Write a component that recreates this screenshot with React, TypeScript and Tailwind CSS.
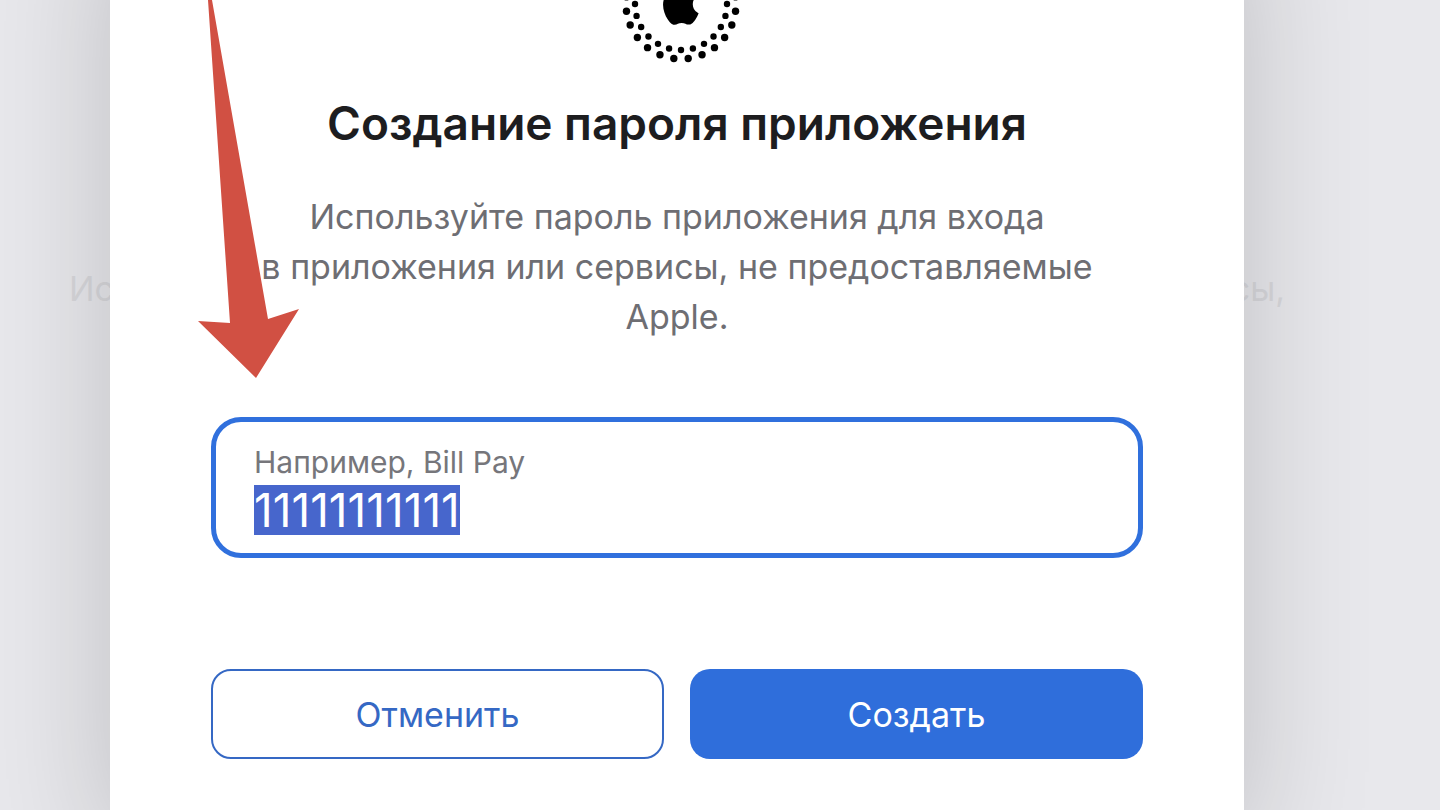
import React, { useEffect, useRef, useState } from 'react';

const STEPS = Array.from({ length: 24 }, (_, i) => i);

// Point on a ring around the centre of the 120x120 badge
const ringPoint = (radius: number, degrees: number) => {
  const rad = (degrees * Math.PI) / 180;
  return { cx: 60 + radius * Math.sin(rad), cy: 60 + radius * Math.cos(rad) };
};

const AccountBadge: React.FC = () => (
  <svg className="mx-auto block translate-x-1" width="120" height="120" viewBox="0 0 120 120" aria-hidden="true">
    {/* Outer ring is shifted by half a step */}
    {STEPS.map((i) => (
      <circle key={`outer-${i}`} {...ringPoint(55, i * 15 + 7.5)} r="3.7" />
    ))}
    {STEPS.map((i) => (
      <circle key={`inner-${i}`} {...ringPoint(46, i * 15)} r="3.2" />
    ))}
    <path
      transform="translate(38 37) scale(1.82)"
      d="M12.152 6.896c-.948 0-2.415-1.078-3.96-1.04-2.04.027-3.91 1.183-4.961 3.014-2.117 3.675-.546 9.103 1.519 12.09 1.013 1.454 2.208 3.09 3.792 3.039 1.52-.065 2.09-.987 3.935-.987 1.831 0 2.35.987 3.96.948 1.637-.026 2.676-1.48 3.676-2.948 1.156-1.688 1.636-3.325 1.662-3.415-.039-.013-3.182-1.221-3.22-4.857-.026-3.04 2.48-4.494 2.597-4.559-1.429-2.09-3.623-2.324-4.39-2.376-2-.156-3.675 1.09-4.61 1.09zM15.53 3.83c.843-1.012 1.4-2.427 1.245-3.83-1.207.052-2.662.805-3.532 1.818-.78.896-1.454 2.338-1.273 3.714 1.338.104 2.715-.688 3.559-1.701"
    />
  </svg>
);

export default function App() {
  const [name, setName] = useState('11111111111');
  const inputRef = useRef<HTMLInputElement>(null);

  // Select the name on open so that it can be typed over
  useEffect(() => {
    inputRef.current?.focus({ preventScroll: true });
    inputRef.current?.select();
  }, []);

  return (
    <div className="relative h-screen overflow-hidden bg-[#e8e8ec] pr-[86px] font-['Inter',sans-serif]">
      {/* Page under the dialog: only the ends of its line stick out */}
      <div className="absolute top-[264px] right-[86px] left-0">
        <p className="mx-auto flex max-w-[1216px] justify-between text-[34px] leading-[50px] text-[#d8d8dc]">
          <span>Ис</span>
          <span>сы,</span>
        </p>
      </div>

      {/* Dialog */}
      <div
        role="dialog"
        aria-labelledby="dialog-title"
        className="relative mx-auto -mt-20 max-w-[1134px] bg-white px-[101px] pt-6 pb-[91px] shadow-[0_0_120px_rgba(0,0,0,0.18)]"
      >
        <AccountBadge />
        <h1 id="dialog-title" className="mt-8 text-center text-[46px] leading-[54px] font-semibold text-[#1d1d1f]">
          Создание пароля приложения
        </h1>
        <p className="mt-[42px] text-center text-[34px] leading-[50px] text-[#6e6e73]">
          Используйте пароль приложения для входа
          <br />
          <span className="whitespace-nowrap">в приложения или сервисы, не предоставляемые</span>
          <br />
          Apple.
        </p>

        <div className="mt-[75px] rounded-[30px] border-5 border-[#3070dd] px-[38px] pt-[20px] pb-[18px]">
          <label htmlFor="app-name" className="block text-[30px] leading-[40px] text-[#76767b]">
            Например, Bill Pay
          </label>
          <input
            id="app-name"
            ref={inputRef}
            type="text"
            value={name}
            onChange={(e) => setName(e.target.value)}
            className="mt-[3px] block h-[50px] w-full text-[46px] leading-[50px] text-[#1d1d1f] outline-none selection:bg-[#4766cc] selection:text-white"
          />
        </div>

        <div className="mt-[111px] grid grid-cols-2 gap-[26px]">
          <button type="button" className="h-[90px] rounded-[20px] border-2 border-[#3568c4] text-[34px] text-[#3568c4]">
            Отменить
          </button>
          <button type="button" className="h-[90px] rounded-[20px] bg-[#2f6edb] text-[34px] text-white">
            Создать
          </button>
        </div>
      </div>

      {/* Arrow to the name field */}
      <svg className="pointer-events-none absolute top-0 left-[198px]" width="102" height="380" viewBox="0 0 102 380" aria-hidden="true">
        <path d="M10 0H14L70 319L101 309L58 378L0 321L32 323Z" fill="#d15043" />
      </svg>
    </div>
  );
}
